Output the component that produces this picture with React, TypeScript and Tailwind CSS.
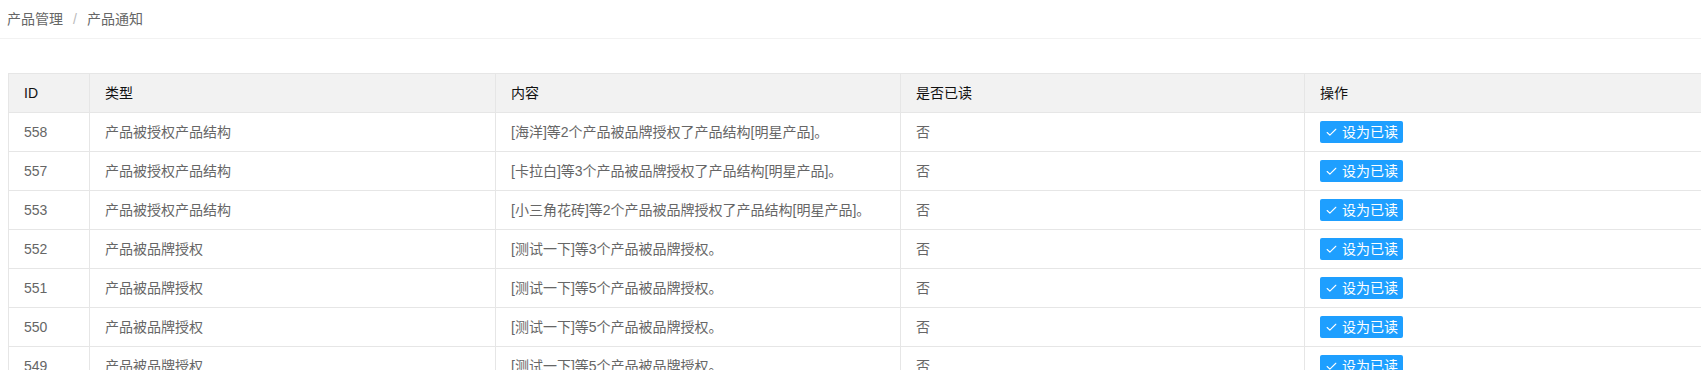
import React from 'react';
import { Check } from 'lucide-react';

interface Notice {
  id: number;
  type: string;
  content: string;
  read: string;
}

const notices: Notice[] = [
  { id: 558, type: '产品被授权产品结构', content: '[海洋]等2个产品被品牌授权了产品结构[明星产品]。', read: '否' },
  { id: 557, type: '产品被授权产品结构', content: '[卡拉白]等3个产品被品牌授权了产品结构[明星产品]。', read: '否' },
  { id: 553, type: '产品被授权产品结构', content: '[小三角花砖]等2个产品被品牌授权了产品结构[明星产品]。', read: '否' },
  { id: 552, type: '产品被品牌授权', content: '[测试一下]等3个产品被品牌授权。', read: '否' },
  { id: 551, type: '产品被品牌授权', content: '[测试一下]等5个产品被品牌授权。', read: '否' },
  { id: 550, type: '产品被品牌授权', content: '[测试一下]等5个产品被品牌授权。', read: '否' },
  { id: 549, type: '产品被品牌授权', content: '[测试一下]等5个产品被品牌授权。', read: '否' },
];

const headers = ['ID', '类型', '内容', '是否已读', '操作'];

const App: React.FC = () => {
  return (
    <div className="h-[370px] w-full overflow-hidden bg-white text-[14px] font-['Liberation_Sans','Noto_Sans_CJK_SC',sans-serif]">
      <div className="h-[39px] flex items-center pl-[7px] border-b border-[#f2f2f2] text-[#666]">
        <span>产品管理</span>
        <span className="mx-[10px] text-[#bbb]">/</span>
        <span>产品通知</span>
      </div>
      <div className="pl-[8px] pt-[34px] overflow-hidden">
        <table className="table-fixed border-collapse w-[1709px]">
          <colgroup>
            <col className="w-[81px]" />
            <col className="w-[406px]" />
            <col className="w-[405px]" />
            <col className="w-[404px]" />
            <col className="w-[413px]" />
          </colgroup>
          <thead>
            <tr className="bg-[#f2f2f2]">
              {headers.map((h) => (
                <th
                  key={h}
                  className="h-[39px] px-[15px] text-left font-normal text-[#111] border border-[#e6e6e6]"
                >
                  {h}
                </th>
              ))}
            </tr>
          </thead>
          <tbody>
            {notices.map((n) => (
              <tr key={n.id}>
                <td className="h-[39px] px-[15px] text-[#666] border border-[#e6e6e6]">{n.id}</td>
                <td className="h-[39px] px-[15px] text-[#666] border border-[#e6e6e6]">{n.type}</td>
                <td className="h-[39px] px-[15px] text-[#666] border border-[#e6e6e6]">{n.content}</td>
                <td className="h-[39px] px-[15px] text-[#666] border border-[#e6e6e6]">{n.read}</td>
                <td className="h-[39px] px-[15px] border border-[#e6e6e6]">
                  <button className="inline-flex items-center h-[22px] pl-[5px] pr-[5px] gap-[4px] rounded-[2px] bg-[#1e9fff] text-white text-[14px] leading-none align-middle">
                    <Check className="w-[13px] h-[13px]" strokeWidth={2} />
                    设为已读
                  </button>
                </td>
              </tr>
            ))}
          </tbody>
        </table>
      </div>
    </div>
  );
};

export default App;
